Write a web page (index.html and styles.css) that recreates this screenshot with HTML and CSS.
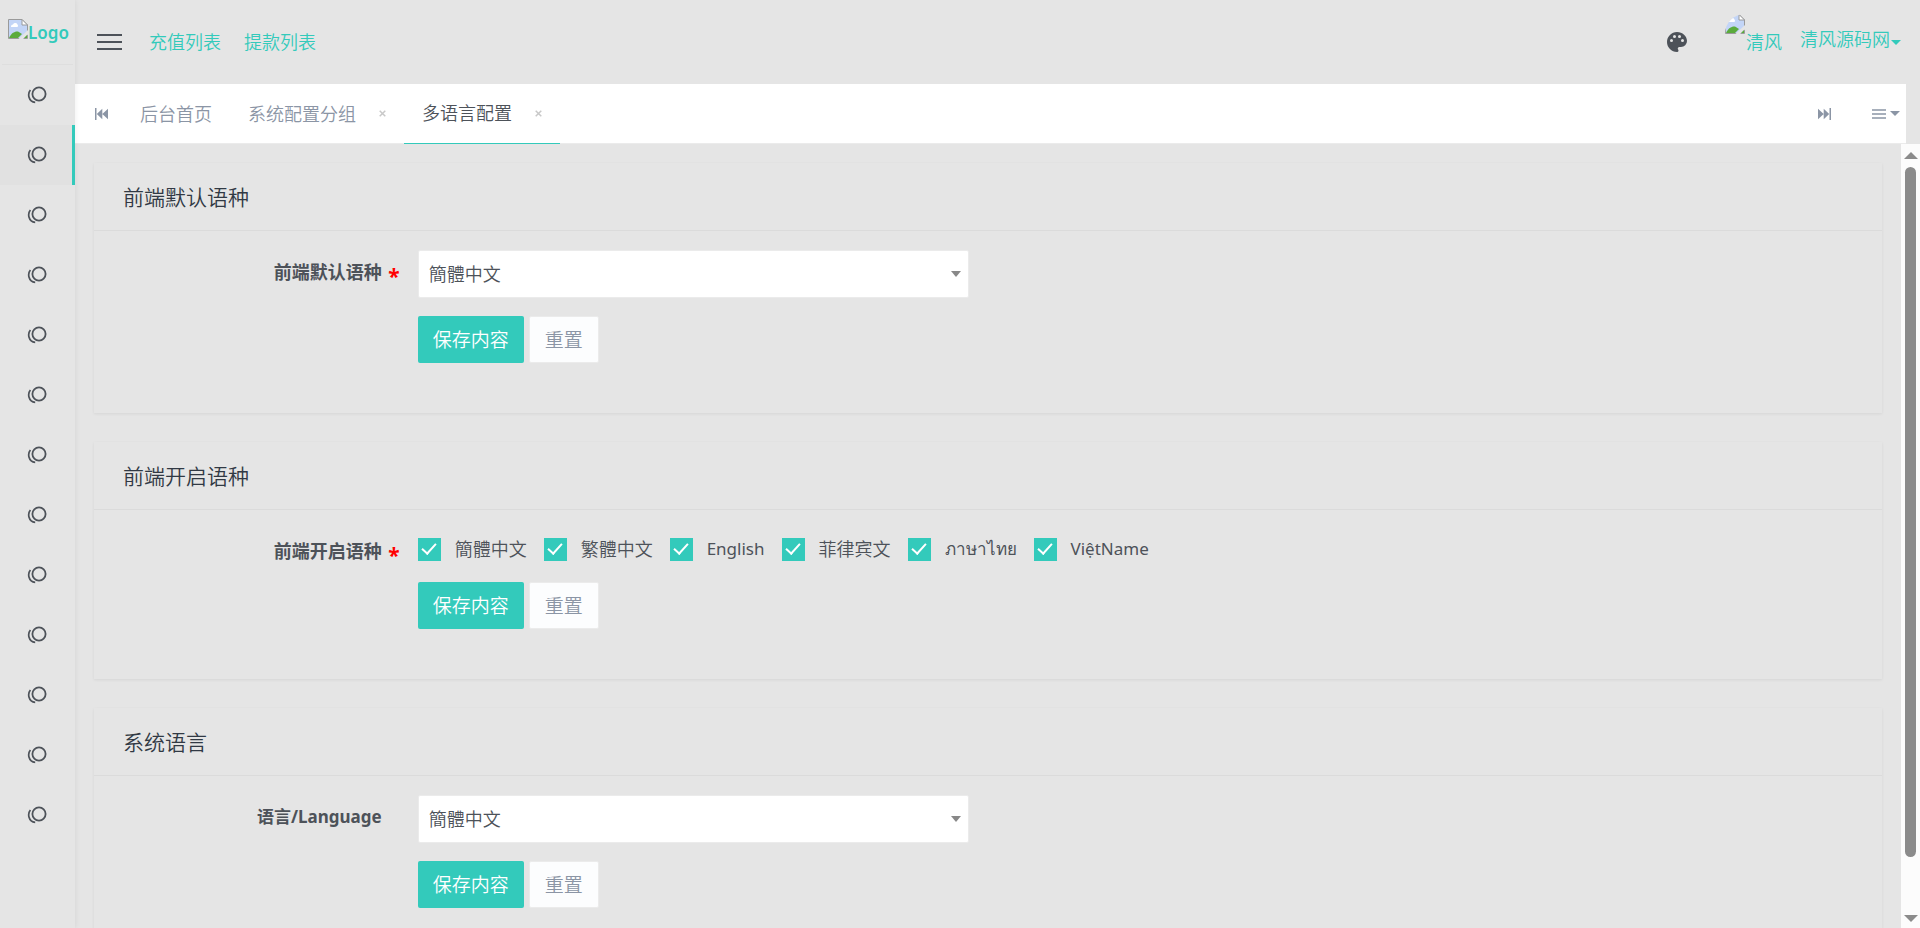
FILE: index.html
```html
<!DOCTYPE html>
<html lang="zh-CN">
<head>
<meta charset="utf-8">
<title>多语言配置</title>
<link rel="stylesheet" href="styles.css">
</head>
<body>
<svg class="defs" aria-hidden="true">
  <symbol id="rings" viewBox="0 0 20 18">
    <circle cx="12" cy="8" r="6.6" fill="none" stroke="currentColor" stroke-width="1.8"/>
    <path d="M3.400 4C.4 7.500 1.200 15.800 8.200 16.300" fill="none" stroke="currentColor" stroke-width="1.700"/>
  </symbol>
  <symbol id="broken" viewBox="0 0 20 20">
    <path d="M.5 .5H14l5.500 5.500V19.500H.5Z" fill="#c3d5f7" stroke="#9a9a9a"/>
    <path d="M14 .5V6h5.500Z" fill="#fff" stroke="#9a9a9a"/>
    <path d="M3 7.500a2 2 0 0 1 2-2 2.500 2.500 0 0 1 4.500 0A1.800 1.800 0 0 1 9.500 8H3Z" fill="#fff"/>
    <path d="M1 19C3 14 7 12 10 12.500L14 15 10 19Z" fill="#5bab3c"/>
    <path d="M10.500 20 20 11v4.500L15 20Z" fill="#e5e5e5"/>
    <path d="M16 19h3v-3Z" fill="#5bab3c"/>
  </symbol>
</svg>
<div class="app">
  <aside class="sidebar">
    <a class="logo" href="#"><svg class="broken"><use href="#broken"/></svg>Logo</a>
    <nav class="side-nav">
      <a href="#" aria-label="菜单 1"><svg><use href="#rings"/></svg></a>
      <a href="#" aria-label="菜单 2" class="active"><svg><use href="#rings"/></svg></a>
      <a href="#" aria-label="菜单 3"><svg><use href="#rings"/></svg></a>
      <a href="#" aria-label="菜单 4"><svg><use href="#rings"/></svg></a>
      <a href="#" aria-label="菜单 5"><svg><use href="#rings"/></svg></a>
      <a href="#" aria-label="菜单 6"><svg><use href="#rings"/></svg></a>
      <a href="#" aria-label="菜单 7"><svg><use href="#rings"/></svg></a>
      <a href="#" aria-label="菜单 8"><svg><use href="#rings"/></svg></a>
      <a href="#" aria-label="菜单 9"><svg><use href="#rings"/></svg></a>
      <a href="#" aria-label="菜单 10"><svg><use href="#rings"/></svg></a>
      <a href="#" aria-label="菜单 11"><svg><use href="#rings"/></svg></a>
      <a href="#" aria-label="菜单 12"><svg><use href="#rings"/></svg></a>
      <a href="#" aria-label="菜单 13"><svg><use href="#rings"/></svg></a>
    </nav>
  </aside>
  <div class="main">
    <header class="topbar">
      <button class="burger" type="button" aria-label="切换菜单"><span></span><span></span><span></span></button>
      <nav class="quick"><a href="#">充值列表</a><a href="#">提款列表</a></nav>
      <button class="palette" type="button" aria-label="主题">
        <svg viewBox="2 2 20 20"><path fill="currentColor" d="M17.500 12a1.500 1.500 0 0 1-1.500-1.500A1.500 1.500 0 0 1 17.500 9a1.500 1.500 0 0 1 1.500 1.500 1.500 1.500 0 0 1-1.500 1.500m-3-4A1.500 1.500 0 0 1 13 6.500 1.500 1.500 0 0 1 14.500 5 1.500 1.500 0 0 1 16 6.500 1.500 1.500 0 0 1 14.500 8m-5 0A1.500 1.500 0 0 1 8 6.500 1.500 1.500 0 0 1 9.500 5 1.500 1.500 0 0 1 11 6.500 1.500 1.500 0 0 1 9.500 8m-3 4A1.500 1.500 0 0 1 5 10.500 1.500 1.500 0 0 1 6.500 9 1.500 1.500 0 0 1 8 10.500 1.500 1.500 0 0 1 6.500 12M12 2C6.500 2 2 6.500 2 12s4.500 10 10 10a1.500 1.500 0 0 0 1.500-1.500c0-.4-.15-.75-.4-1-.2-.3-.35-.6-.35-1a1.500 1.500 0 0 1 1.500-1.500H16a6 6 0 0 0 6-6c0-5-4.500-9-10-9Z"/></svg>
      </button>
      <a class="user" href="#">
        <span class="avatar"><svg class="broken"><use href="#broken"/></svg></span>
        <span class="alt">清风</span>
        <span class="name">清风源码网</span><span class="caret"></span>
      </a>
    </header>
    <div class="tabs">
      <button class="tab-step" type="button" aria-label="上一个"><svg viewBox="0 0 14 12"><path fill="currentColor" d="M0 0h1.500v12H0ZM7.300 .8v10.400L1.800 6ZM13 .8v10.400L7.300 6Z"/></svg></button>
      <a class="tab" href="#">后台首页</a>
      <a class="tab" href="#">系统配置分组<svg class="close" viewBox="0 0 7 7"><path d="M.7 .7l5.600 5.600M6.300 .7L.7 6.300"/></svg></a>
      <a class="tab current" href="#">多语言配置<svg class="close" viewBox="0 0 7 7"><path d="M.7 .7l5.600 5.600M6.300 .7L.7 6.300"/></svg></a>
      <button class="tab-step next" type="button" aria-label="下一个"><svg viewBox="0 0 14 12"><path fill="currentColor" d="M11.500 0H13v12h-1.500ZM5.700 .8v10.400L11.200 6ZM0 .8v10.400L5.700 6Z"/></svg></button>
      <button class="tab-menu" type="button" aria-label="标签菜单"><svg viewBox="0 0 14 10"><path stroke="currentColor" stroke-width="1.500" d="M0 1h14M0 5h14M0 9h14"/></svg><span class="caret"></span></button>
    </div>
    <div class="frame">
      <main class="content">
        <section class="card">
          <h2>前端默认语种</h2>
          <form class="grid">
            <label class="label required" for="front">前端默认语种</label>
            <div class="field select"><select id="front"><option>簡體中文</option></select><span class="caret"></span></div>
            <div class="actions"><button class="btn save" type="button">保存内容</button><button class="btn reset" type="reset">重置</button></div>
          </form>
        </section>
        <section class="card">
          <h2>前端开启语种</h2>
          <form class="grid">
            <span class="label required">前端开启语种</span>
            <div class="field checks">
              <label><input type="checkbox" checked>簡體中文</label>
              <label><input type="checkbox" checked>繁體中文</label>
              <label class="latin"><input type="checkbox" checked>English</label>
              <label><input type="checkbox" checked>菲律宾文</label>
              <label class="thai"><input type="checkbox" checked>ภาษาไทย</label>
              <label class="latin"><input type="checkbox" checked>ViệtName</label>
            </div>
            <div class="actions"><button class="btn save" type="button">保存内容</button><button class="btn reset" type="reset">重置</button></div>
          </form>
        </section>
        <section class="card">
          <h2>系统语言</h2>
          <form class="grid">
            <label class="label latin" for="system">语言/Language</label>
            <div class="field select"><select id="system"><option>簡體中文</option></select><span class="caret"></span></div>
            <div class="actions"><button class="btn save" type="button">保存内容</button><button class="btn reset" type="reset">重置</button></div>
          </form>
        </section>
      </main>
      <div class="scrollbar" aria-hidden="true"><span class="up"></span><span class="thumb"></span><span class="rest"></span><span class="down"></span></div>
    </div>
  </div>
</div>
</body>
</html>
```

FILE: styles.css
```css
* { box-sizing: border-box; }
body {
  margin: 0;
  background: #e5e5e5;
  color: #4d5259;
  font: 350 18px/28px "Noto Sans", "Noto Sans CJK SC", sans-serif;
}
a { color: #33cabb; text-decoration: none; }
button { padding: 0; border: 0; background: none; color: inherit; font: inherit; }
svg { display: block; }
.defs { position: absolute; width: 0; height: 0; }
.app { display: flex; height: 100vh; overflow: hidden; }

.sidebar {
  flex: none;
  width: 75px;
  z-index: 1;
  box-shadow: 0 0 6px rgba(0, 0, 0, .08);
}
.logo {
  display: flex;
  height: 65px;
  margin: 0 2px;
  padding: 19px 0 0 6px;
  border-bottom: 1px solid #dedede;
  font-weight: 600;
  font-size: 17px;
}
.broken { width: 20px; height: 20px; flex: none; }
.side-nav { display: flex; flex-direction: column; }
.side-nav a {
  display: flex;
  height: 60px;
  padding: 21px 0 0 27px;
  color: #4d5259;
}
.side-nav a.active { background: #e1e1e1; border-right: 3px solid #33cabb; }
.side-nav svg { width: 20px; height: 18px; }

.main { flex: 1; min-width: 0; display: flex; flex-direction: column; }
.topbar {
  display: flex;
  align-items: center;
  height: 84px;
  padding: 0 19px 0 22px;
  flex: none;
}
.burger { display: grid; gap: 5px; width: 25px; margin-right: 27px; }
.burger span { height: 2px; background: #4d5259; }
.quick { display: flex; gap: 23px; }
.palette { margin-left: auto; margin-right: 38px; }
.palette svg { width: 20px; height: 20px; }
.user { display: flex; align-items: center; }
.avatar { width: 20px; height: 56px; margin-right: 1px; overflow: hidden; }
.avatar .broken { border-radius: 100% 0 0 0; }
.alt { margin-right: 18px; }
.caret {
  width: 0;
  height: 0;
  border: 5px solid transparent;
  border-top-color: currentColor;
  border-bottom: 0;
}
.name { margin-right: 1px; padding-bottom: 6px; }

.tabs {
  display: flex;
  align-items: center;
  height: 60px;
  flex: none;
  margin-right: 14px;
  padding: 0 6px 0 20px;
  background: #fff;
  border-bottom: 1px solid #ebebeb;
  color: #8b95a5;
}
.tab-step svg { width: 14px; height: 12px; }
.tab-step { margin-right: 13px; }
.tab {
  display: flex;
  align-items: center;
  height: 60px;
  padding: 0 18px;
  color: #8b95a5;
}
.tab.current { color: #4d5259; border-bottom: 1px solid #33cabb; }
.close { width: 7px; height: 7px; margin-left: 23px; stroke: #c8c8c8; stroke-width: 1.500; }
.next { margin-left: auto; margin-right: 40px; }
.tab-menu { display: flex; align-items: center; gap: 4px; }
.tab-menu svg { width: 14px; height: 10px; }

.frame { flex: 1; min-height: 0; display: flex; }
.content { flex: 1; overflow: hidden; padding: 19px; }
.card {
  margin-bottom: 29px;
  box-shadow: 0 1px 3px rgba(0, 0, 0, .07);
}
.card h2 {
  margin: 0;
  padding: 20px 29px 19px;
  border-bottom: 1px solid #dbdbdb;
  color: #313944;
  font: inherit;
  font-size: 21px;
}
.grid {
  display: grid;
  grid-template-columns: 2fr 4fr 6fr;
  row-gap: 18px;
  padding: 19px 13px 50px;
}
.label {
  position: relative;
  margin: 9px 19px 0;
  text-align: right;
  font-weight: 700;
  line-height: 26px;
}
.required::after {
  content: "*";
  position: absolute;
  right: -18px;
  top: 4px;
  color: #f00;
  font-size: 21px;
}
.field { margin: 0 19px 0 17px; }
.select { display: grid; align-items: center; }
.select select {
  grid-area: 1 / 1;
  width: 100%;
  height: 48px;
  padding: 0 10px;
  appearance: none;
  border: 1px solid #ebebeb;
  border-radius: 2px;
  background: #fff;
  color: #4d5259;
  font: inherit;
}
.select .caret { grid-area: 1 / 1; justify-self: end; margin-right: 8px; border-width: 6px 5px 0; color: #888; pointer-events: none; }
.checks { grid-column: 2 / 4; display: flex; gap: 17px; padding: 6px 0 1px; }
.checks label { display: flex; align-items: center; gap: 14px; }
.checks input {
  appearance: none;
  width: 23px;
  height: 23px;
  margin: 0;
  display: grid;
  place-items: center;
  background: #33cabb;
}
.checks input::after {
  content: "";
  width: 6px;
  height: 12px;
  margin-bottom: 4px;
  border: solid #fff;
  border-width: 0 2px 2px 0;
  transform: rotate(42deg);
}
.checks .latin { font-weight: 400; }
.latin { font-size: 17px; }
.checks .thai { font-size: 17px; font-weight: 500; }
.actions { grid-column: 2 / 4; display: flex; gap: 5px; margin: 0 17px; }
.btn { height: 47px; padding: 0 15px; border-radius: 2px; font-size: 19px; }
.save { background: #33cabb; color: #fff; }
.reset { background: #fcfdfe; border: 1px solid #ebebeb; color: #8b95a5; }

.scrollbar {
  display: flex;
  flex-direction: column;
  align-items: center;
  width: 19px;
  flex: none;
  padding: 8px 0 6px;
  background: #fcfcfc;
}
.up, .down { border: 7px solid transparent; }
.up { border-top: 0; border-bottom-color: #8b8b8b; margin-bottom: 8px; }
.down { border-bottom: 0; border-top-color: #8b8b8b; }
.thumb { flex: 691; width: 11px; border-radius: 6px; background: #8b8b8b; }
.rest { flex: 58; }
```
